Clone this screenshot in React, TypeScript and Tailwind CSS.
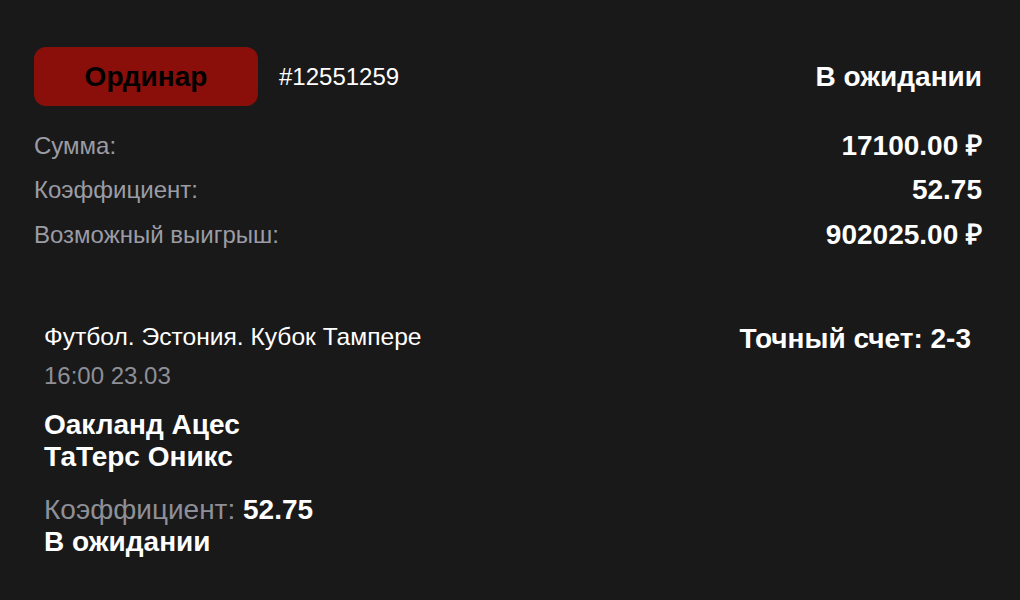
import React from "react";

export default function App() {
  return (
    <div
      className="w-[1020px] h-[600px] bg-[#19191a] text-white overflow-hidden"
      style={{ fontFamily: '"Liberation Sans", Arial, sans-serif' }}
    >
      <div className="pl-[34px] pr-[38px] pt-[47px]">
        <div className="flex items-center justify-between">
          <div className="flex items-center">
            <div className="w-[224px] h-[59px] rounded-[12px] bg-[#8a0f0a] flex items-center justify-center text-black font-bold text-[28px]">
              Ординар
            </div>
            <div className="ml-[21px] text-[24px]">#12551259</div>
          </div>
          <div className="font-bold text-[28px]">В ожидании</div>
        </div>
        <div className="mt-[18px] flex flex-col">
          <div className="flex justify-between items-center h-[44px]">
            <span className="text-[24px] text-[#9b9ca4]">Сумма:</span>
            <span className="font-bold text-[28px]">17100.00 ₽</span>
          </div>
          <div className="flex justify-between items-center h-[44px]">
            <span className="text-[24px] text-[#9b9ca4]">Коэффициент:</span>
            <span className="font-bold text-[28px]">52.75</span>
          </div>
          <div className="flex justify-between items-center h-[45px]">
            <span className="text-[24px] text-[#9b9ca4]">Возможный выигрыш:</span>
            <span className="font-bold text-[28px]">902025.00 ₽</span>
          </div>
        </div>
        <div className="mt-[66px] pl-[10px] pr-[11px] flex justify-between items-start">
          <div className="flex flex-col">
            <div className="text-[24.6px] leading-[28px]">Футбол. Эстония. Кубок Тампере</div>
            <div className="mt-[11px] text-[24px] leading-[28px] text-[#8e8f97]">16:00 23.03</div>
            <div className="mt-[19px] font-bold text-[28px] leading-[32px]">
              <div>Оакланд Ацес</div>
              <div>ТаТерс Оникс</div>
            </div>
            <div className="mt-[21px] text-[28px] leading-[32px]">
              <span className="text-[#8e8f97]">Коэффициент: </span>
              <span className="font-bold">52.75</span>
            </div>
            <div className="font-bold text-[28px] leading-[32px]">В ожидании</div>
          </div>
          <div className="font-bold text-[28px] leading-[32px]">Точный счет: 2-3</div>
        </div>
      </div>
    </div>
  );
}
